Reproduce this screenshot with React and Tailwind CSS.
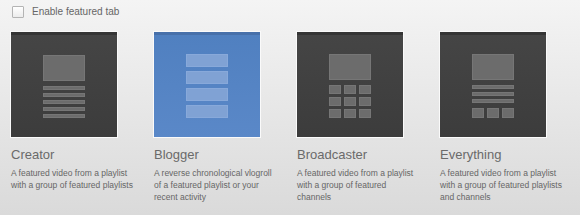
import React from 'react';

const Shape = ({ className = '', blue }) => (
    <div
        className={`${blue ? 'bg-[#80a2d4] border-[#88a9da]' : 'bg-[#6c6c6c] border-[#767676]'} border ${className}`}
    />
);

const CreatorIcon = () => (
    <div className="flex flex-col w-[42px]">
        <Shape className="h-[26px]" />
        <div className="flex flex-col gap-[3px] mt-[5px]">
            {[0, 1, 2, 3, 4].map((i) => (
                <Shape key={i} className="h-[4px]" />
            ))}
        </div>
    </div>
);

const BloggerIcon = () => (
    <div className="flex flex-col gap-[4px] w-[42px]">
        {[0, 1, 2, 3].map((i) => (
            <Shape key={i} blue className="h-[13px]" />
        ))}
    </div>
);

const BroadcasterIcon = () => (
    <div className="flex flex-col w-[42px]">
        <Shape className="h-[26px]" />
        <div className="grid grid-cols-3 gap-[3px] mt-[5px]">
            {[0, 1, 2, 3, 4, 5, 6, 7, 8].map((i) => (
                <Shape key={i} className="h-[9px]" />
            ))}
        </div>
    </div>
);

const EverythingIcon = () => (
    <div className="flex flex-col w-[42px]">
        <Shape className="h-[26px]" />
        <div className="flex flex-col gap-[3px] mt-[5px]">
            {[0, 1, 2].map((i) => (
                <Shape key={i} className="h-[4px]" />
            ))}
        </div>
        <div className="grid grid-cols-3 gap-[3px] mt-[5px]">
            {[0, 1, 2].map((i) => (
                <Shape key={i} className="h-[10px]" />
            ))}
        </div>
    </div>
);

const layouts = [
    {
        title: 'Creator',
        lines: ['A featured video from a playlist', 'with a group of featured playlists'],
        icon: <CreatorIcon />,
    },
    {
        title: 'Blogger',
        lines: ['A reverse chronological vlogroll', 'of a featured playlist or your', 'recent activity'],
        icon: <BloggerIcon />,
        selected: true,
    },
    {
        title: 'Broadcaster',
        lines: ['A featured video from a playlist', 'with a group of featured', 'channels'],
        icon: <BroadcasterIcon />,
    },
    {
        title: 'Everything',
        lines: ['A featured video from a playlist', 'with a group of featured playlists', 'and channels'],
        icon: <EverythingIcon />,
    },
];

const App = () => {
    return (
        <div
            className="w-[580px] h-[215px] bg-gradient-to-b from-[#f4f4f4] to-[#dadada] overflow-hidden"
            style={{ fontFamily: '"Liberation Sans", Arial, sans-serif' }}
        >
            <div className="flex items-center h-[12px] mt-[6px] ml-[12px]">
                <div className="w-[12px] h-[12px] border border-[#b4b4b4] bg-gradient-to-b from-[#ffffff] to-[#ececec] rounded-[1px]" />
                <span className="ml-[8px] text-[10px] text-[#666] leading-none">Enable featured tab</span>
            </div>

            <div className="flex pl-[11px] mt-[14px]">
                {layouts.map((item) => (
                    <div key={item.title} className="w-[143px] shrink-0">
                        <div
                            className={`w-[106px] h-[105px] flex items-center justify-center outline outline-1 outline-[#fafafa] ${
                                item.selected
                                    ? 'bg-gradient-to-b from-[#5080c0] to-[#5a88c8] border-t-[3px] border-[#4770aa]'
                                    : 'bg-gradient-to-b from-[#454545] to-[#3c3c3c] border-t-[3px] border-[#353535]'
                            }`}
                        >
                            {item.icon}
                        </div>
                        <div className="mt-[10px] text-[13px] leading-[16px] text-[#6a6a6a]">{item.title}</div>
                        <div className="mt-[4px] text-[8.5px] leading-[12px] text-[#666]">
                            {item.lines.map((line) => (
                                <div key={line}>{line}</div>
                            ))}
                        </div>
                    </div>
                ))}
            </div>
        </div>
    );
};

export default App;
